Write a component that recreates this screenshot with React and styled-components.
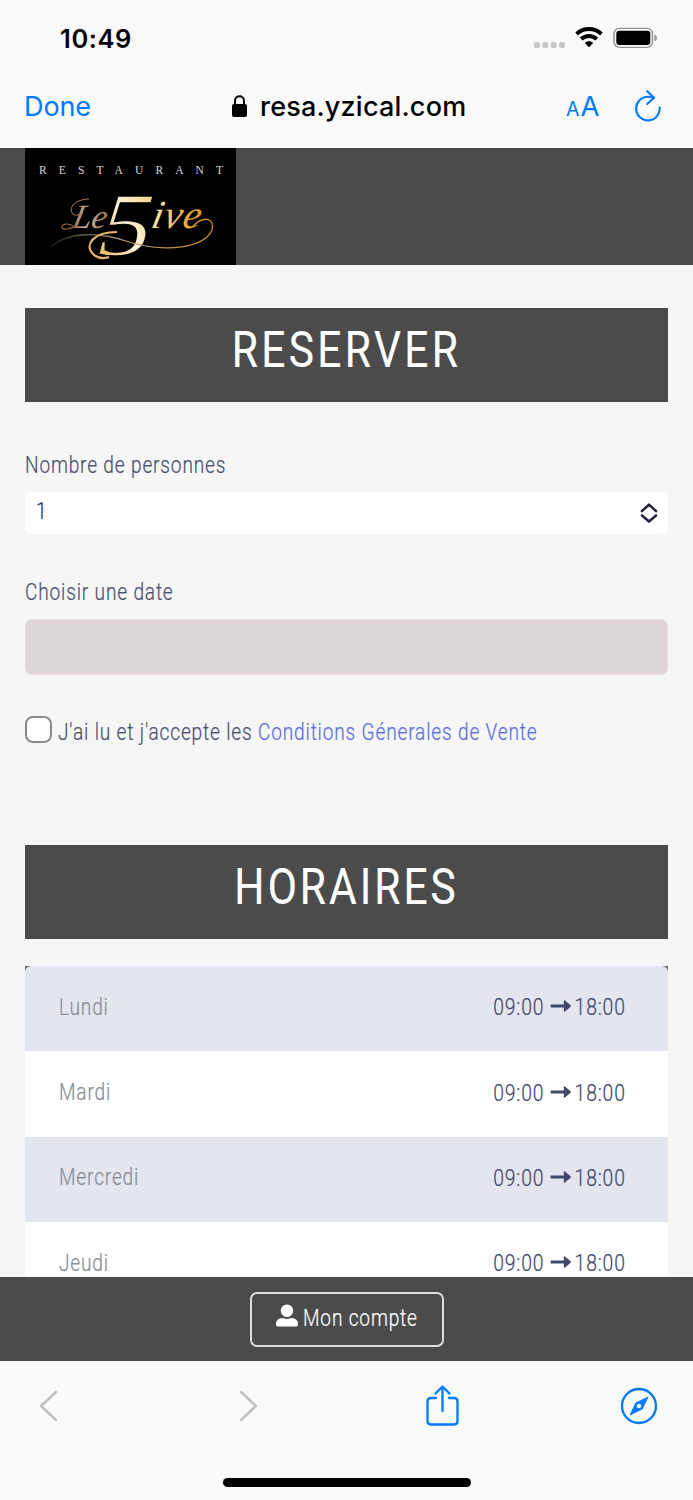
import React from 'react';
import styled, { createGlobalStyle } from 'styled-components';
import { FaUserAlt } from 'react-icons/fa';

const GlobalStyle = createGlobalStyle`
  * {
    box-sizing: border-box;
  }
  body {
    margin: 0;
    background: #f6f6f6;
  }
`;

const Screen = styled.div`
  display: flex;
  flex-direction: column;
  width: 693px;
  height: 1500px;
  overflow: hidden;
  font-family: Roboto, 'Liberation Sans', sans-serif;
  background: #f6f6f6;
`;

const StatusBar = styled.div`
  display: flex;
  flex: none;
  align-items: center;
  justify-content: space-between;
  height: 76px;
  padding: 0 36px 0 60px;
  background: #f9f9f9;
`;

const Clock = styled.div`
  padding-top: 1px;
  font: 600 25.5px/30px Inter, sans-serif;
  letter-spacing: 0.6px;
  color: #000;
`;

const StatusIcons = styled.svg`
  display: block;
  width: 124px;
  height: 24px;
`;

const AddressBar = styled.div`
  display: grid;
  flex: none;
  grid-template-columns: 207px 1fr 33px 62px;
  align-items: center;
  height: 71.5px;
  padding: 0 32px 11px 24px;
  background: #f9f9f9;
  font-family: Inter, sans-serif;
`;

const Done = styled.div`
  font-size: 27px;
  letter-spacing: -0.1px;
  color: #007aff;
`;

const Url = styled.div`
  display: flex;
  align-items: center;
  gap: 12px;
  font-size: 27px;
  font-weight: 500;
  letter-spacing: 0.2px;
  color: #000;
`;

const TextSize = styled.div`
  display: flex;
  align-items: baseline;
  gap: 1px;
  font-size: 27.5px;
  color: #007aff;

  small {
    font-size: 19.5px;
  }
`;

const Refresh = styled.svg`
  justify-self: end;
`;

const Brand = styled.header`
  flex: none;
  height: 117px;
  padding-left: 25px;
  background: #4b4b4b;
`;

const Logo = styled.svg`
  display: block;
  width: 211px;
  height: 117px;
  background: #000;
`;

const Main = styled.main`
  flex: 1;
  min-height: 0;
  overflow: hidden;
  padding: 43.5px 25px 0;
`;

const Title = styled.h1`
  display: flex;
  justify-content: center;
  height: 94px;
  margin: 0;
  background: #4b4b4b;
  color: #fff;
  font-size: 50.5px;
  font-weight: 400;
  line-height: 83px;
`;

// Squeezes Roboto into a narrow face
const Narrow = styled.span`
  display: inline-block;
  white-space: nowrap;
  letter-spacing: ${(props) => props.$spacing || 1}px;
  transform: scaleX(${(props) => props.$scale || 0.83});
  transform-origin: ${(props) => props.$origin || 'left'} center;
  -webkit-text-stroke: 0.2px currentColor;
`;

const Label = styled.label`
  display: block;
  height: 28px;
  margin-top: ${(props) => props.$top}px;
  font-size: 23px;
  font-weight: 300;
  line-height: 29px;
  color: #4a5070;
`;

const Select = styled.div`
  display: flex;
  align-items: center;
  justify-content: space-between;
  height: 42px;
  margin-top: 13px;
  padding: 0 10px 0 11px;
  border-radius: 6px;
  background: #fff;
  color: #2a2e4c;
  font-size: 23px;
  font-weight: 300;
  line-height: 36px;

  span {
    margin-top: -3px;
  }
`;

const DateField = styled.div`
  height: 56px;
  margin-top: 13px;
  border: 1px solid #e2dcdc;
  border-radius: 7px;
  background: #ddd7d7;
`;

const Terms = styled.div`
  display: flex;
  gap: 6px;
  height: 28px;
  margin: 41px 0 101px;
  font-size: 23px;
  font-weight: 300;
  line-height: 33px;
  color: #4a5070;
`;

const Checkbox = styled.div`
  width: 27px;
  height: 27px;
  border: 2.5px solid #8a8a8e;
  border-radius: 8px;
  background: #fff;
`;

const Link = styled.a`
  color: #5b70dc;
`;

const Schedule = styled.div`
  margin-top: 27px;
  background: #6d6d6d;
`;

const Day = styled.div`
  display: flex;
  align-items: center;
  justify-content: space-between;
  height: 85.4px;
  padding: 0 42px 2px 34px;
  background: ${(props) => (props.$shaded ? '#e3e6ee' : '#fff')};
  border-radius: ${(props) => (props.$first ? '6px 6px 0 0' : '0')};
  font-size: 23px;
  font-weight: 300;
  line-height: 28px;
  color: #868e96;
`;

const Hours = styled.div`
  padding-top: 1px;
  color: #41486a;
  font-size: 23px;

  svg {
    width: 25px;
    height: 12px;
    margin: 0 4px 0 7px;
    vertical-align: 3px;
  }
`;

const AccountBar = styled.div`
  display: flex;
  flex: none;
  align-items: center;
  justify-content: center;
  height: 84px;
  background: #4b4b4b;
`;

const AccountButton = styled.button`
  display: flex;
  gap: 5px;
  width: 194px;
  height: 55px;
  padding: 12px 0 0 24px;
  border: 2px solid #dcdcdc;
  border-radius: 7px;
  background: none;
  color: #fff;
  font: 300 23px/26px Roboto, sans-serif;

  svg {
    flex: none;
    width: 22px;
    height: 23px;
    margin-top: -2px;
  }
`;

const Toolbar = styled.nav`
  flex: none;
  height: 139px;
  padding-top: 22px;
  background: #f9fafa;
`;

const ToolbarIcons = styled.div`
  display: grid;
  grid-template-columns: 200px 187px 1fr auto;
  align-items: center;
  height: 46px;
  padding: 0 35px 0 38px;
`;

const HomeIndicator = styled.div`
  width: 248px;
  height: 9px;
  margin: 49px auto 0;
  border-radius: 5px;
  background: #000;
`;

const days = ['Lundi', 'Mardi', 'Mercredi', 'Jeudi'];

const RestaurantLogo = () => (
  <Logo viewBox="0 0 211 117">
    <defs>
      <linearGradient id="gold" x1="0" x2="1">
        <stop offset="0" stopColor="#8a5b38" />
        <stop offset="0.4" stopColor="#c9bfb2" />
        <stop offset="1" stopColor="#a87747" />
      </linearGradient>
      <linearGradient id="amber" x1="0" x2="1">
        <stop offset="0" stopColor="#ffe7ac" />
        <stop offset="1" stopColor="#df9415" />
      </linearGradient>
      <linearGradient id="five" x1="0" x2="1" y1="1" y2="0">
        <stop offset="0" stopColor="#e0a33c" />
        <stop offset="0.5" stopColor="#fff3dc" />
        <stop offset="1" stopColor="#f4c66a" />
      </linearGradient>
      <linearGradient id="swash" x1="0" x2="1">
        <stop offset="0" stopColor="#1c1712" />
        <stop offset="0.4" stopColor="#a99c86" />
        <stop offset="1" stopColor="#d58a18" />
      </linearGradient>
    </defs>
    <text x="14" y="26" fontFamily="Liberation Serif" fontSize="11.5" fill="#d5d5d5" textLength="184">
      RESTAURANT
    </text>
    <g fontFamily="Liberation Serif" fontStyle="italic">
      <text x="0" y="0" fontSize="34" fill="url(#gold)" transform="translate(46 80) skewX(-12)">
        Le
      </text>
      <text x="0" y="0" fontSize="90" fill="url(#five)" stroke="#000" strokeWidth="1.2" transform="translate(72 107) skewX(-6) scale(1.18 1)">
        5
      </text>
      <text x="0" y="0" fontSize="40" fill="url(#amber)" textLength="49" transform="translate(125 80) skewX(-12)">
        ive
      </text>
    </g>
    <path d="M26 99 C43 83 75 84 104 94 C141 105 179 100 187 82 C190 69 178 68 168 78" fill="none" stroke="url(#swash)" strokeWidth="1.3" />
    <path d="M64 51 C52 51 42 59 48 66 C51 68 55 67 58 65" fill="none" stroke="#a5886a" strokeWidth="1" />
    <path d="M50 79 C43 74 36 76 37 80 C40 83 47 80 52 78" fill="none" stroke="#936340" strokeWidth="1.2" />
    <path d="M92 84 C68 84 59 97 68 106 C72 110 78 111 84 109" fill="none" stroke="#e6b665" strokeWidth="2.2" />
  </Logo>
);

const App = () => {
  return (
    <Screen>
      <GlobalStyle />
      <StatusBar>
        <Clock>10:49</Clock>
        <StatusIcons viewBox="0 0 124 24">
          <g fill="#c6c6c6">
            <rect x="1" y="16" width="6" height="6" rx="2" />
            <rect x="9.3" y="16" width="6" height="6" rx="2" />
            <rect x="17.7" y="16" width="6" height="6" rx="2" />
            <rect x="26" y="16" width="6" height="6" rx="2" />
          </g>
          <g fill="none" stroke="#000" strokeWidth="3.9">
            <path d="M43.6 8 C50.7 1.4 61.3 1.4 68.4 8" />
            <path d="M48.2 13 C52.8 8.9 59.2 8.9 63.8 13" />
          </g>
          <path d="M51.8 16.9 C54.3 14.8 57.7 14.8 60.2 16.9 L56 21.2 Z" />
          <rect x="81" y="2.4" width="38.5" height="19" rx="5.5" fill="none" stroke="#929292" strokeWidth="1.4" />
          <rect x="83.3" y="4.8" width="34" height="14.2" rx="3" />
          <path d="M121.5 8.5 Q124 9.4 124 12 Q124 14.5 121.5 15.4 Z" fill="#929292" />
        </StatusIcons>
      </StatusBar>
      <AddressBar>
        <Done>Done</Done>
        <Url>
          <svg width="17" height="24" viewBox="0 0 17 24">
            <rect x="1" y="10" width="15" height="13" rx="2" />
            <path d="M4 11 V7 C4 .7 13 .7 13 7 V11" fill="none" stroke="#000" strokeWidth="2" />
          </svg>
          resa.yzical.com
        </Url>
        <TextSize>
          <small>A</small>A
        </TextSize>
        <Refresh width="26" height="32" viewBox="0 0 26 32" fill="none" stroke="#007aff" strokeWidth="2.1" strokeLinecap="round" strokeLinejoin="round">
          <path d="M24.7 17.6 A11.8 11.8 0 1 1 13 6.8 Q16 6.8 19 7.8" />
          <path d="M12.2 1.2 L19 7.8 L12.2 14" />
        </Refresh>
      </AddressBar>
      <Brand>
        <RestaurantLogo />
      </Brand>
      <Main>
        <Title>
          <Narrow $origin="center" $scale={0.84} $spacing={4}>RESERVER</Narrow>
        </Title>
        <Label $top={49}>
          <Narrow>Nombre de personnes</Narrow>
        </Label>
        <Select>
          <Narrow>1</Narrow>
          <svg width="18" height="20" viewBox="0 0 18 20" fill="none" stroke="#24283f" strokeWidth="2.6" strokeLinecap="round" strokeLinejoin="round">
            <path d="M2 8 L9 1.6 L16 8" />
            <path d="M2 12.5 L9 18.5 L16 12.5" />
          </svg>
        </Select>
        <Label $top={44}>
          <Narrow>Choisir une date</Narrow>
        </Label>
        <DateField />
        <Terms>
          <Checkbox />
          <Narrow>
            J'ai lu et j'accepte les <Link>Conditions Génerales de Vente</Link>
          </Narrow>
        </Terms>
        <Title>
          <Narrow $origin="center" $scale={0.84} $spacing={3.6}>HORAIRES</Narrow>
        </Title>
        <Schedule>
          {days.map((day, index) => (
            <Day key={day} $shaded={index % 2 === 0} $first={index === 0}>
              <Narrow>{day}</Narrow>
              <Hours>
                <Narrow $origin="right" $scale={0.84}>
                  09:00
                  <svg viewBox="0 0 25 12" fill="currentColor">
                    <path d="M1 4.4 H16 V1.2 Q16 -.2 17.4 .6 L23.8 5 Q25 6 23.8 7 L17.4 11.4 Q16 12.2 16 10.8 V7.6 H1 Q0 7.6 0 6.6 V5.4 Q0 4.4 1 4.4 Z" />
                  </svg>
                  18:00
                </Narrow>
              </Hours>
            </Day>
          ))}
        </Schedule>
      </Main>
      <AccountBar>
        <AccountButton>
          <FaUserAlt />
          <Narrow>Mon compte</Narrow>
        </AccountButton>
      </AccountBar>
      <Toolbar>
        <ToolbarIcons>
          <svg width="20" height="32" viewBox="0 0 20 32" fill="none" stroke="#bfbfbf" strokeWidth="2.5" strokeLinecap="round" strokeLinejoin="round">
            <path d="M18 2 L3 16 L18 30" />
          </svg>
          <svg width="20" height="32" viewBox="0 0 20 32" fill="none" stroke="#bfbfbf" strokeWidth="2.5" strokeLinecap="round" strokeLinejoin="round">
            <path d="M3 2 L18 16 L3 30" />
          </svg>
          <svg width="34" height="42" viewBox="0 0 34 42" fill="none" stroke="#007aff" strokeWidth="2.3" strokeLinecap="round" strokeLinejoin="round">
            <path d="M11 13 H6 Q2.5 13 2.5 16.5 V36 Q2.5 39.5 6 39.5 H29 Q32.5 39.5 32.5 36 V16.5 Q32.5 13 29 13 H24" />
            <path d="M17.5 26 V2 M10.5 8.5 L17.5 1.5 L24.5 8.5" />
          </svg>
          <svg width="38" height="38" viewBox="0 0 38 38">
            <circle cx="19" cy="19" r="17" fill="none" stroke="#007aff" strokeWidth="2.3" />
            <path
              fillRule="evenodd"
              fill="#007aff"
              stroke="#007aff"
              strokeWidth="0.8"
              strokeLinejoin="round"
              d="M28 10 L22.3 22 L10 28 L15.7 16 Z M19 16.4 A2.6 2.6 0 1 0 19 21.6 A2.6 2.6 0 1 0 19 16.4 Z"
            />
          </svg>
        </ToolbarIcons>
        <HomeIndicator />
      </Toolbar>
    </Screen>
  );
};

export default App;
